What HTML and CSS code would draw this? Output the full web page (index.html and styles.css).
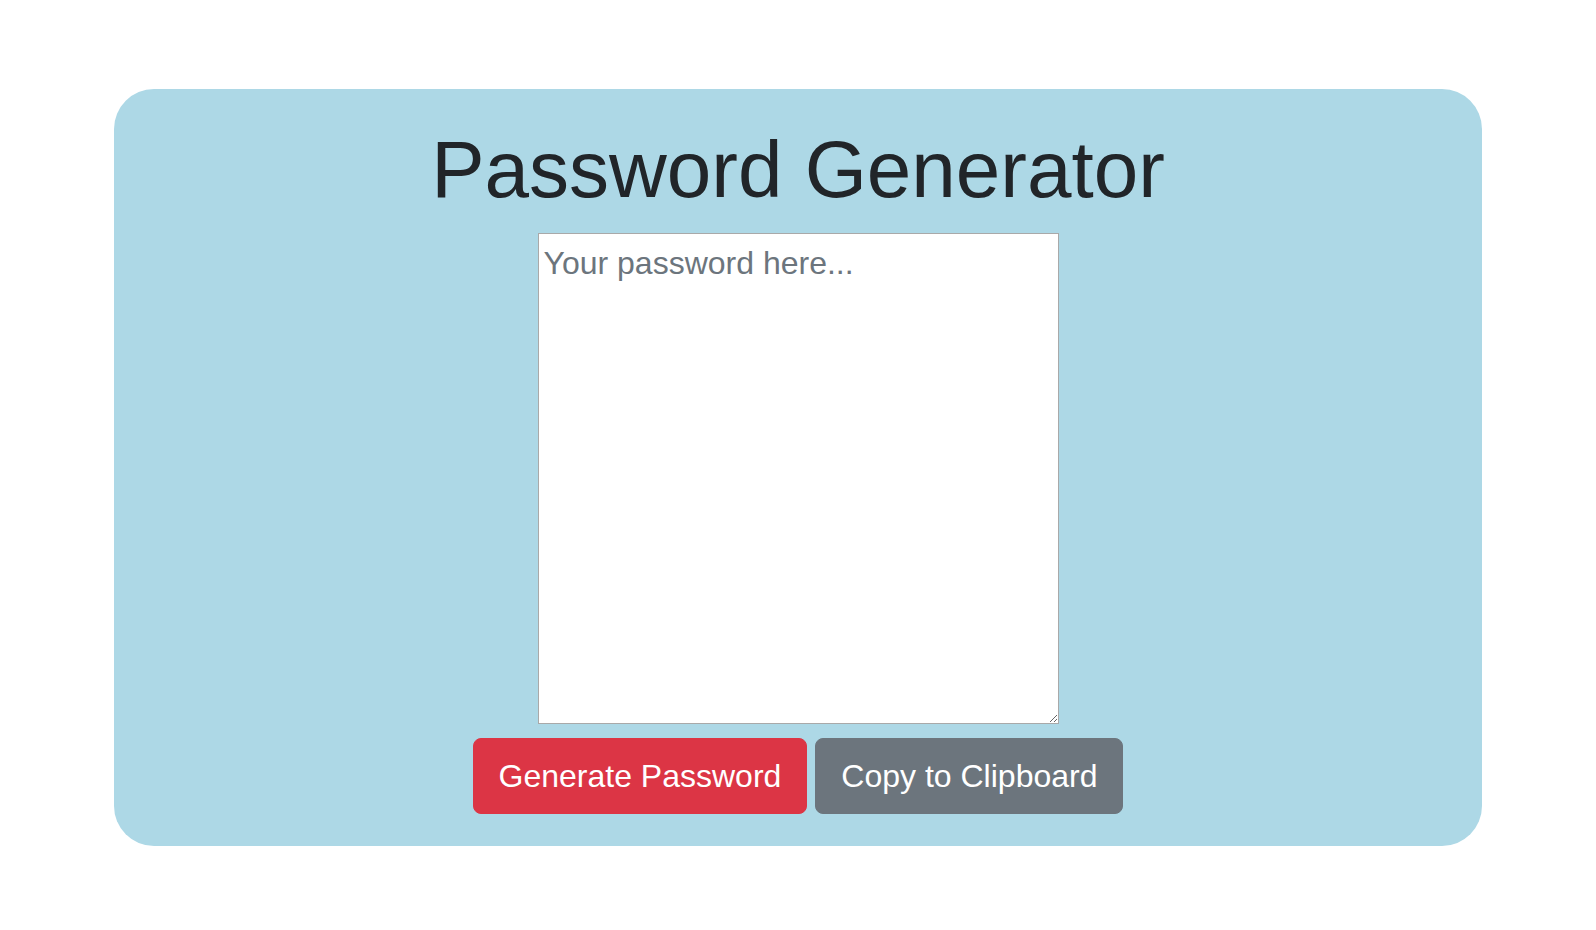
FILE: index.html
```html
<!DOCTYPE html>
<html lang="en">
<head>
<meta charset="UTF-8">
<meta name="viewport" content="width=device-width, initial-scale=1.0">
<title>Password Generator</title>
<link rel="stylesheet" href="styles.css">
</head>
<body>
  <!-- main card -->
  <div class="card">
    <h1 class="title">Password Generator</h1>
    <textarea class="password" id="password" placeholder="Your password here..."></textarea>
    <div class="actions">
      <button class="btn btn-danger" id="generate">Generate Password</button>
      <button class="btn btn-secondary" id="copy">Copy to Clipboard</button>
    </div>
  </div>
</body>
</html>
```

FILE: styles.css
```css
body {
  margin: 0;
  padding: 0;
  font-family: 'Liberation Sans', Arial, sans-serif;
  color: #212529;
  background-color: #fff;
}

.card {
  width: 1368px;
  margin: 89px auto 0;
  padding: 33px 0 32px;
  box-sizing: border-box;
  background-color: lightblue;
  border-radius: 40px;
  text-align: center;
}

.title {
  margin: 0 0 15px;
  font-size: 80px;
  font-weight: 400;
  line-height: 1.2;
  color: #212529;
}

.password {
  display: block;
  margin: 0 auto;
  width: 521px;
  height: 491px;
  box-sizing: border-box;
  padding: 5px;
  border: 1px solid #a9a9a9;
  font-family: 'Liberation Sans', Arial, sans-serif;
  font-size: 32px;
  line-height: 1.5;
  color: #212529;
  background-color: #fff;
}

.password::placeholder {
  color: #6c757d;
}

/* buttons row */
.actions {
  display: flex;
  justify-content: center;
  gap: 8px;
  margin-top: 14px;
}

.btn {
  font-family: 'Liberation Sans', Arial, sans-serif;
  font-size: 32px;
  line-height: 1.5;
  padding: 13px 25px;
  border: 1px solid transparent;
  border-radius: 8px;
  color: #fff;
  cursor: pointer;
}

.btn-danger {
  background-color: #dc3545;
  border-color: #dc3545;
}

.btn-secondary {
  background-color: #6c757d;
  border-color: #6c757d;
}
```
